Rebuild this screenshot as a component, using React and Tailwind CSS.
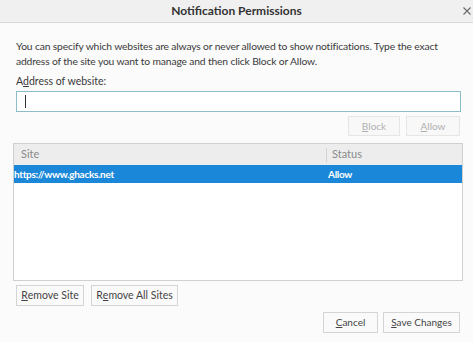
export default function App() {
  const font = { fontFamily: 'Lato, "Open Sans", sans-serif' };
  return (
    <div className="w-[474px] h-[346px] bg-white overflow-hidden text-[#333]" style={font}>
      <div className="w-[473px] h-[342px] bg-[#fbfbfb] flex flex-col">
        <div className="h-[23px] bg-[#f0f0f0] border-b border-[#d8d8d8] flex items-center relative">
          <div className="flex-1 text-center text-[12px] font-bold text-[#333]">Notification Permissions</div>
          <svg className="absolute left-[463px] top-[7px]" width="8" height="8" viewBox="0 0 8 8">
            <path d="M0.5 0.5 L7.5 7.5 M7.5 0.5 L0.5 7.5" stroke="#6a6a6a" strokeWidth="1.1" />
          </svg>
        </div>
        <div className="flex flex-col pl-[16px] pr-[8px] pt-[16px]">
          <p className="text-[10.3px] leading-[15px] text-[#3a3a3a] tracking-[-0.15px] whitespace-nowrap">
            You can specify which websites are always or never allowed to show notifications. Type the exact
            <br />
            address of the site you want to manage and then click Block or Allow.
          </p>
          <div className="mt-[5px] text-[10.5px] leading-[15px] text-[#3a3a3a]">A<span className="underline">d</span>dress of website:</div>
        </div>
        <div className="flex flex-col ml-[16px] mr-[12px]">
          <div className="mt-[2px] h-[21px] bg-white border border-[#8cbdc9] flex items-center pl-[8px]">
            <div className="w-px h-[13px] bg-[#333]" />
          </div>
          <div className="mt-[4px] flex justify-end gap-[6px] mr-[1px]">
            <div className="w-[52px] h-[20px] border border-[#e6e6e6] bg-[#f8f8f8] flex items-center justify-center text-[10px] text-[#b0b0b0]"><span className="underline">B</span>lock</div>
            <div className="w-[54px] h-[20px] border border-[#e6e6e6] bg-[#f8f8f8] flex items-center justify-center text-[10px] text-[#b0b0b0]"><span className="underline">A</span>llow</div>
          </div>
        </div>
        <div className="ml-[13px] mr-[10px] mt-[7px] h-[138px] bg-white border border-[#d0d0d0] flex flex-col">
          <div className="h-[21px] bg-[#ededed] flex items-center text-[11px] text-[#8a8a8a]">
            <div className="w-[313px] pl-[7px] border-r border-[#d2d2d2] h-[14px] flex items-center">Site</div>
            <div className="pl-[5px]">Status</div>
          </div>
          <div className="h-[18px] bg-[#1a87d8] flex items-center text-[10px] font-bold text-white tracking-[-0.3px]">
            <div className="w-[314px]">https://www.ghacks.net</div>
            <div>Allow</div>
          </div>
        </div>
        <div className="ml-[16px] mt-[4px] flex gap-[7px]">
          <div className="w-[68px] h-[21px] border border-[#d4d4d4] bg-[#fafafa] flex items-center justify-center text-[10.5px] text-[#444] whitespace-nowrap"><span className="underline">R</span>emove Site</div>
          <div className="w-[87px] h-[21px] border border-[#d4d4d4] bg-[#fafafa] flex items-center justify-center text-[10.5px] text-[#444] whitespace-nowrap">R<span className="underline">e</span>move All Sites</div>
        </div>
        <div className="mr-[13px] mt-[6px] flex justify-end gap-[5px]">
          <div className="w-[55px] h-[21px] border border-[#d4d4d4] bg-[#fafafa] flex items-center justify-center text-[10px] text-[#444] whitespace-nowrap"><span className="underline">C</span>ancel</div>
          <div className="w-[77px] h-[21px] border border-[#d4d4d4] bg-[#fafafa] flex items-center justify-center text-[10px] text-[#444] whitespace-nowrap"><span className="underline">S</span>ave Changes</div>
        </div>
      </div>
    </div>
  );
}
